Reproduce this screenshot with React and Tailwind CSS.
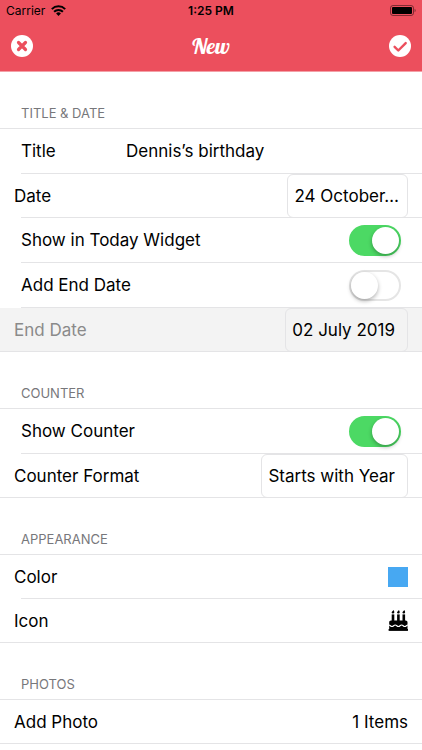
import { useState } from "react";

function WifiIcon() {
  return (
    <svg width="15" height="11" viewBox="0 0 15 11" fill="none" stroke="currentColor" strokeWidth="2" aria-hidden="true">
      <path d="M0.8 4.1a9.5 9.5 0 0 1 13.4 0" />
      <path d="M3.1 6.8a6.2 6.2 0 0 1 8.8 0" />
      <path d="M7.5 10.9 5.1 8.5a3.4 3.4 0 0 1 4.8 0Z" fill="currentColor" stroke="none" />
    </svg>
  );
}

function BatteryIcon() {
  return (
    <svg width="26" height="11" viewBox="0 0 26 11" aria-hidden="true">
      <rect x="0.5" y="0.5" width="23" height="10" rx="2.5" fill="none" stroke="#000" strokeOpacity="0.45" />
      <rect x="2" y="2" width="20" height="7" rx="1" fill="#000" />
      <path d="M24.6 3.8c1.4.4 1.4 3 0 3.4Z" fill="#000" fillOpacity="0.5" />
    </svg>
  );
}

function CloseIcon() {
  return (
    <svg width="22" height="22" viewBox="0 0 22 22" aria-hidden="true">
      <circle cx="11" cy="11" r="11" fill="#fff" />
      <path d="M7.5 7.5l7 7M14.5 7.5l-7 7" stroke="#ec4f5d" strokeWidth="3.2" strokeLinecap="round" />
    </svg>
  );
}

function DoneIcon() {
  return (
    <svg width="22" height="22" viewBox="0 0 22 22" aria-hidden="true">
      <circle cx="11" cy="11" r="11" fill="#fff" />
      <path d="M5.6 11.8l3.7 3.7 7.4-7.4" fill="none" stroke="#ec4f5d" strokeWidth="2.4" strokeLinecap="round" strokeLinejoin="round" />
    </svg>
  );
}

function CakeIcon() {
  return (
    <svg width="20" height="21" viewBox="0 0 20 21" aria-hidden="true">
      {[5, 10.4, 15.8].map((x) => (
        <g key={x}>
          <rect x={x - 1.3} y="4.4" width="2.6" height="7" />
          <path d={`M${x + 0.5} 0c1.2 1.6 1.2 3.6-.5 3.6-1.8 0-1.6-1.8-.6-2.4.6-.4 1-.8 1.1-1.2Z`} />
        </g>
      ))}
      <path d="M3 10.4h14.6c1.1 0 1.9.8 1.9 1.8V20.6H1.2v-8.4c0-1 .8-1.8 1.8-1.8Z" />
      <path d="M.8 15c1.6 0 1.6 1.5 3.2 1.5S5.6 15 7.2 15s1.6 1.5 3.2 1.5S12 15 13.6 15s1.6 1.5 3.2 1.5S18.4 15 20 15" fill="none" stroke="#fff" strokeWidth="1.1" />
      <rect x="0.6" y="19" width="19.4" height="1.8" />
    </svg>
  );
}

function Section({ title, children }) {
  return (
    <section>
      <h2 className="flex h-14 items-end px-[21px] pb-[7px] text-[13px] leading-4 text-[#77777b]">{title}</h2>
      <ul className="border-t border-[#e4e4e6]">{children}</ul>
    </section>
  );
}

// field rows are indented to the divider, picker rows sit further out
function FieldRow({ children }) {
  return (
    <li className="group">
      <div className="flex h-11 items-center px-[21px]">{children}</div>
      <div className="ml-[21px] h-px bg-[#e4e4e6] group-last:ml-0" />
    </li>
  );
}

function PickerRow({ disabled, children }) {
  return (
    <li className={disabled ? "group bg-[#f3f3f3] text-[#8a8a8a]" : "group"}>
      <div className="flex h-[43px] items-center justify-between px-3.5">{children}</div>
      <div className="ml-[21px] h-px bg-[#e4e4e6] group-last:ml-0" />
    </li>
  );
}

function SwitchRow({ id, label, checked, onChange }) {
  return (
    <FieldRow>
      <label htmlFor={id} className="flex-1">{label}</label>
      <input
        id={id}
        type="checkbox"
        role="switch"
        checked={checked}
        onChange={(e) => onChange(e.target.checked)}
        className="h-[31px] w-[52px] appearance-none rounded-full border-2 border-[#e5e5e5] bg-white transition before:block before:size-[27px] before:rounded-full before:bg-white before:shadow-[0_2px_4px_rgba(0,0,0,0.3)] before:transition checked:border-[#4cd964] checked:bg-[#4cd964] checked:before:translate-x-[21px]"
      />
    </FieldRow>
  );
}

function PickerButton({ id, labelledBy, className = "pr-3", children }) {
  return (
    <button
      id={id}
      type="button"
      aria-haspopup="dialog"
      aria-labelledby={`${labelledBy} ${id}`}
      className={`h-11 rounded-md border border-[#e4e4e6] pl-1.5 text-left whitespace-nowrap text-black ${className}`}
    >
      {children}
    </button>
  );
}

export default function App() {
  const [title, setTitle] = useState("Dennis’s birthday");
  const [todayWidget, setTodayWidget] = useState(true);
  const [hasEndDate, setHasEndDate] = useState(false);
  const [showCounter, setShowCounter] = useState(true);

  return (
    <div className="min-h-screen bg-white font-['Inter',sans-serif] text-[17px] leading-6 text-black">
      <header className="border-b border-[#f3a0a7] bg-[#ec4f5d]">
        {/* Status bar */}
        <div className="grid h-[21px] grid-cols-3 items-center px-1.5 text-xs">
          <div className="flex items-center gap-1.5">
            <span>Carrier</span>
            <WifiIcon />
          </div>
          <span className="text-center font-semibold">1:25 PM</span>
          <div className="flex justify-end">
            <BatteryIcon />
          </div>
        </div>

        {/* Navigation bar */}
        <div className="flex h-[50px] items-center justify-between px-[11px]">
          <button type="button" aria-label="Close"><CloseIcon /></button>
          <h1 className="font-['Lobster','Liberation_Serif',serif] text-[22px] text-white">New</h1>
          <button type="button" aria-label="Done"><DoneIcon /></button>
        </div>
      </header>

      <main>
        <Section title="TITLE & DATE">
          <FieldRow>
            <label htmlFor="title" className="w-[105px]">Title</label>
            <input
              id="title"
              type="text"
              value={title}
              onChange={(e) => setTitle(e.target.value)}
              className="min-w-0 flex-1 outline-none"
            />
          </FieldRow>
          <PickerRow>
            <span id="date-label">Date</span>
            <PickerButton id="date" labelledBy="date-label" className="pr-2">24 October…</PickerButton>
          </PickerRow>
          <SwitchRow id="today" label="Show in Today Widget" checked={todayWidget} onChange={setTodayWidget} />
          <SwitchRow id="has-end" label="Add End Date" checked={hasEndDate} onChange={setHasEndDate} />
          <PickerRow disabled={!hasEndDate}>
            <span id="end-label">End Date</span>
            <PickerButton id="end" labelledBy="end-label">02 July 2019</PickerButton>
          </PickerRow>
        </Section>

        <Section title="COUNTER">
          <SwitchRow id="counter" label="Show Counter" checked={showCounter} onChange={setShowCounter} />
          <PickerRow>
            <span id="format-label">Counter Format</span>
            <PickerButton id="format" labelledBy="format-label">Starts with Year</PickerButton>
          </PickerRow>
        </Section>

        <Section title="APPEARANCE">
          <PickerRow>
            <span>Color</span>
            <button type="button" aria-label="Color" className="size-5 bg-[#47a8f2]" />
          </PickerRow>
          <PickerRow>
            <span>Icon</span>
            <button type="button" aria-label="Icon"><CakeIcon /></button>
          </PickerRow>
        </Section>

        <Section title="PHOTOS">
          <PickerRow>
            <span>Add Photo</span>
            <span>1 Items</span>
          </PickerRow>
        </Section>
      </main>
    </div>
  );
}
